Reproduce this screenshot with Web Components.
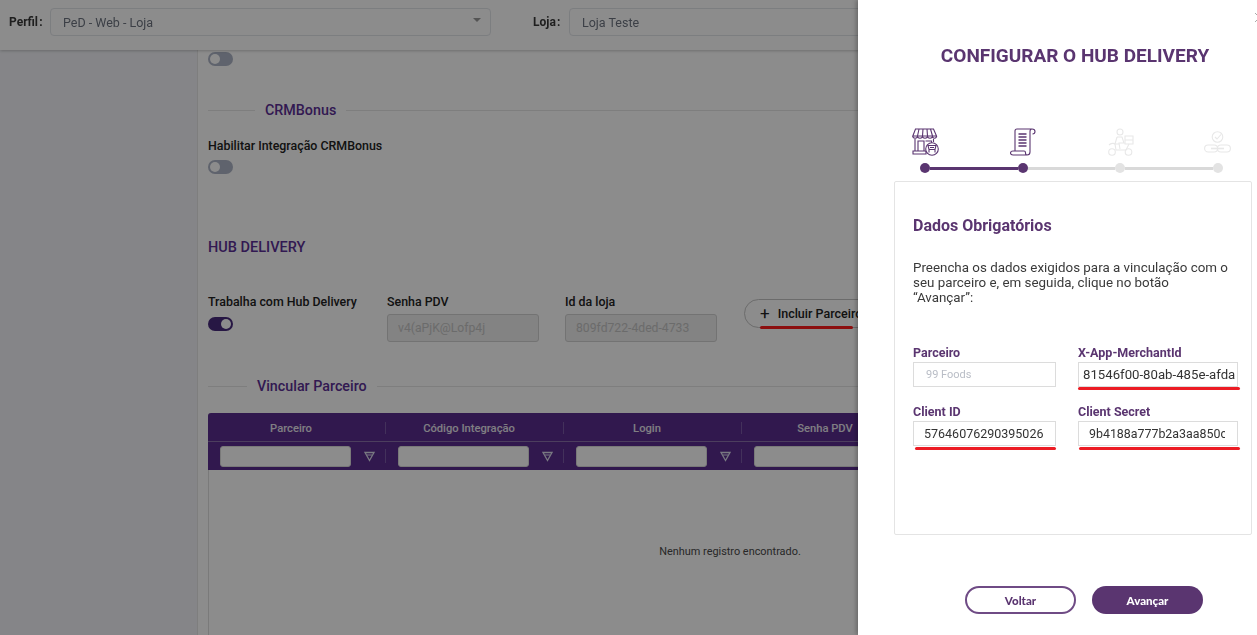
<!DOCTYPE html>
<html lang="pt-BR"><head><meta charset="utf-8"><title>Hub Delivery</title>
<style>
html,body{margin:0;height:635px;overflow:hidden;background:#fff;font-family:Roboto,"Liberation Sans",sans-serif}
</style></head><body>
<app-page></app-page>
<script>
const def=(name,html,init)=>customElements.define(name,class extends HTMLElement{
  constructor(){super();this.attachShadow({mode:'open'}).innerHTML=typeof html==='function'?html(this):html;}
  connectedCallback(){if(init)init(this);}
});
const funnel='<svg width="11" height="11" viewBox="0 0 11 11" fill="none" stroke="#dcdcec" stroke-width="1.3"><path d="M1 1.500h9L5.500 9.500z"/><path d="M3 4h5" stroke-width="1"/></svg>';

def('toggle-switch',t=>`<style>
:host{display:block;width:25px;height:14px;border-radius:7px;background:${t.hasAttribute('on')?'#472a7c':'#adb5c6'};position:relative}
i{position:absolute;top:2px;${t.hasAttribute('on')?'right:2px':'left:2px'};width:10px;height:10px;border-radius:50%;background:#fff}
</style><i></i>`);

def('select-box',t=>`<style>
:host{display:flex;align-items:center;box-sizing:border-box;height:28px;border:1px solid #e2e5ea;border-radius:4px;padding-left:12px;font-size:12.500px;color:#6d7480;position:relative;background:#fff}
b{position:absolute;right:9px;top:9px;border:4px solid transparent;border-top:4px solid #9a9a9a;border-bottom:0;${t.hasAttribute('caret')?'':'display:none'}}
</style><slot></slot><b></b>`);

def('top-bar',`<style>
:host{display:flex;align-items:center;box-sizing:border-box;height:50px;flex:none;background:#fff;box-shadow:0 1px 3px rgba(0,0,0,.22);position:relative;z-index:1;padding:0 0 6px 9px;font-size:12px;color:#3a3a3a}
label{font-weight:700;white-space:nowrap}
.a{width:41px;flex:none}
.p{width:441px;flex:none}.l{width:640px;flex:none}
.b{width:36px;flex:none;margin-left:42px}
</style><label class="a">Perfil&#8202;:</label><select-box class="p" caret>PeD - Web - Loja</select-box><label class="b">Loja&#8202;:</label><select-box class="l">Loja Teste</select-box>`);

def('legend-title',t=>`<style>
:host{display:flex;align-items:center;height:16px;font-size:14.300px;font-weight:500;color:#5b2f95;white-space:nowrap}
i{height:1px;background:#e6e6e6}
.x{width:${t.getAttribute('lead')||47}px;margin-right:10px;flex:none}
.y{flex:1;margin-left:10px}
</style><i class="x"></i><slot></slot><i class="y"></i>`);

def('field-label',`<style>:host{display:block;height:14px;line-height:14px;font-size:12.400px;font-weight:500;color:#222;white-space:nowrap}</style><slot></slot>`);

def('ro-input',`<style>:host{display:block;box-sizing:border-box;width:152px;height:28px;border:1px solid #d2d2d2;border-radius:3px;background:#eee;padding:0 25px 0 10px;font-size:12.200px;color:#c4c4c4;white-space:nowrap}
div{overflow:hidden;line-height:26px}
</style><div><slot></slot></div>`);

def('partner-table',`<style>
:host{display:block;width:1044px;height:300px;background:#fff;border:1px solid #dfdfdf;border-top:0;border-radius:3px 3px 0 0;box-sizing:border-box;font-size:11.200px;color:#555}
.head{background:#5a2d8f;border-radius:3px 3px 0 0;margin:0 -1px}
.row{display:flex}
.h{height:29px;padding-top:2px;border-bottom:1px solid #8a72ac;box-sizing:border-box}
.c{width:178px;flex:none;box-sizing:border-box;display:flex;align-items:center;justify-content:center;padding-right:12px;color:#e9e6ee;font-weight:500;position:relative}
.c::after{content:"";position:absolute;right:0;top:7px;bottom:7px;width:1px;background:#7a5aa6}
.f{height:28px}
.f .c{justify-content:flex-start;padding:0 0 0 12px}
.f input{box-sizing:border-box;width:131px;height:21px;border:1px solid #ddd;border-radius:3px;background:#fff;padding:0;margin:0}
.f svg{margin-left:13px}
.empty{text-align:center;padding-top:75px;line-height:14px;color:#4a4a4a;font-size:10.900px}
</style>
<div class="head">
<div class="row h"><div class="c">Parceiro</div><div class="c">Código Integração</div><div class="c">Login</div><div class="c">Senha PDV</div></div>
<div class="row f"><div class="c"><input aria-label="Parceiro">${funnel}</div><div class="c"><input aria-label="Código">${funnel}</div><div class="c"><input aria-label="Login">${funnel}</div><div class="c"><input aria-label="Senha">${funnel}</div></div>
</div>
<div class="empty">Nenhum registro encontrado.</div>`);

def('main-content',`<style>
:host{display:block;flex:1;min-width:0;background:#fff;padding:2px 0 0 10px;overflow:hidden}
legend-title.crm{margin-top:36px}
field-label.hab{margin-top:21px}
toggle-switch.t2{margin-top:7px}
.hub{margin-top:66px;height:16px;line-height:16px;font-size:14.500px;font-weight:500;color:#5b2f95}
.row{display:grid;grid-template-columns:179px 178px 179px 1fr;margin-top:38px;height:49px}
.row field-label{transform:translateY(1px)}
.row toggle-switch{margin-top:9px}
.row ro-input{margin-top:6px}
.btn{box-sizing:border-box;margin:5px 0 0 0;width:170px;height:29px;border:1px solid #c4c4c4;border-radius:15px;display:flex;align-items:center;padding-left:15px;font-size:12.500px;font-weight:500;color:#222;white-space:nowrap;position:relative}
.btn span{font-size:17px;font-weight:400;margin-right:8px;line-height:1}
.btn::after{content:"";position:absolute;left:15px;top:26px;width:93px;height:3px;border-radius:2px;background:#ff1d1d;z-index:2}
.vin{margin-top:35px}
partner-table{margin-top:19px}
</style>
<toggle-switch></toggle-switch>
<legend-title class="crm" lead="47">CRMBonus</legend-title>
<field-label class="hab">Habilitar Integração CRMBonus</field-label>
<toggle-switch class="t2"></toggle-switch>
<div class="hub">HUB DELIVERY</div>
<div class="row">
<div><field-label>Trabalha com Hub Delivery</field-label><toggle-switch on></toggle-switch></div>
<div><field-label>Senha PDV</field-label><ro-input>v4(aPjK@Lofp4j</ro-input></div>
<div><field-label>Id da loja</field-label><ro-input>809fd722-4ded-4733</ro-input></div>
<div class="btn"><span>+</span>Incluir Parceiro</div>
</div>
<legend-title class="vin" lead="39">Vincular Parceiro</legend-title>
<partner-table></partner-table>`);

const ic={
store:c=>`<svg width="27" height="28" viewBox="0 0 27 28" fill="none" stroke="${c}" stroke-width="1.100"><path d="M3.500 1h18l3 7H.8z"/><path d="M7 1L5.500 8M11 1l-.5 7M15 1l.5 7M18.500 1l2 7"/><path d="M.8 8c0 3 4.700 3 4.700 0 0 3 5 3 5 0 0 3 5 3 5 0 0 3 5 3 5 0 0 3 4 3 4 0"/><path d="M3 11v12M21.500 11v3"/><path d="M6 23V13h6v10M13.500 13h6v3"/><path d="M1 23h13v3H1z"/><circle cx="20" cy="21" r="6.300" fill="#fff"/><path d="M16 17.500h8l-1 4h-6zM17 21.500v3M23 21.500v3M18 19.500h4"/></svg>`,
scroll:c=>`<svg width="26" height="28" viewBox="0 0 26 28" fill="none" stroke="${c}" stroke-width="1.100"><path d="M5 23V3c0-1.300.8-2 2-2h15c1.500 0 3 1 3 2.500S24 6 22.500 6M22 1c-1.300 0-2 1-2 2.500V24c0 2-1 3-3 3H3c-1.500 0-2.500-1-2.500-2s1-2 2.500-2h11c1 0 1.500.7 1.500 1.700S16 27 17 27"/><path d="M8.500 6h8M8.500 9h8M8.500 12h8M8.500 15h8M8.500 18h8" stroke-width="1.300"/></svg>`,
scooter:c=>`<svg width="27" height="28" viewBox="0 0 27 28" fill="none" stroke="${c}" stroke-width="1.100"><circle cx="13" cy="4" r="3"/><path d="M10 9h5l2 6h-5l1 6M10 9l-2 7 4 0"/><path d="M18 8h8v8h-8zM18 12h8"/><path d="M2 17c2-2 5-2 6-1l1 6h10l3-6"/><circle cx="5" cy="24" r="3.300"/><circle cx="21.500" cy="24" r="3.300"/></svg>`,
chain:c=>`<svg width="27" height="22" viewBox="0 0 27 22" fill="none" stroke="${c}" stroke-width="1.100"><circle cx="13.500" cy="6" r="5.300"/><path d="M11 6l2 2 4-4.500"/><rect x=".6" y="14" width="13" height="7" rx="3.500"/><rect x="13.400" y="14" width="13" height="7" rx="3.500"/><path d="M7 17.500h13" stroke-width="1.600"/></svg>`
};
def('step-bar',`<style>
:host{display:block;width:303px;margin-left:26px}
.icons{display:flex;justify-content:space-between;height:28px;align-items:center}
.cell{width:10px;display:flex;justify-content:center}
svg{flex:none}
.track{display:flex;align-items:center;margin-top:7px}
i{width:10px;height:10px;border-radius:50%;background:#5a3570;flex:none}
i.off{background:#e3e3e3}
u{flex:1;height:3px;background:#5a3570;display:block}
u.off{background:#d9d9d9}
</style>
<div class="icons">
<div class="cell">${ic.store('#5a3570')}</div><div class="cell">${ic.scroll('#5a3570')}</div><div class="cell">${ic.scooter('#e8e8e8')}</div><div class="cell">${ic.chain('#e8e8e8')}</div>
</div>
<div class="track"><i></i><u></u><i></i><u class="off"></u><i class="off"></i><u class="off"></u><i class="off"></i></div>`);

def('form-field',t=>`<style>
:host{display:block;position:relative}
label{display:block;height:14px;line-height:14px;font-size:12.500px;font-weight:700;color:#5a3570;white-space:nowrap}
.v{box-sizing:border-box;height:25px;margin-top:2px;border:1px solid #dcdcdc;background:#fff;white-space:nowrap;font-size:${t.getAttribute('fs')||'12.600'}px;color:#333;padding:0 ${t.getAttribute('padr')||'0'}px 0 ${t.getAttribute('pad')||'12'}px}
.v div{overflow:hidden;line-height:23px}
:host([muted]) .v{font-size:11px;color:#b9bdc6}
.r{position:absolute;left:${t.getAttribute('rl')||'0'}px;right:${t.getAttribute('rr')||'0'}px;top:${t.getAttribute('rt')||'41'}px;height:3px;border-radius:2px;background:#ec1c24;${t.hasAttribute('mark')?'':'display:none'}}
</style><label>${t.getAttribute('label')}</label><div class="v"><div><slot></slot></div></div><div class="r"></div>`);

def('data-card',`<style>
:host{display:block;box-sizing:border-box;width:358px;height:354px;border:1px solid #e4e4e4;border-radius:2px;padding:35px 10px 0 18px;color:#333}
h2{margin:0;font-size:16px;line-height:18px;font-weight:700;color:#5a3570}
p{margin:25px 0 0;font-size:13.360px;line-height:15px;color:#3a3a3a;white-space:nowrap}
.grid{display:grid;grid-template-columns:143px 160px;column-gap:22px;row-gap:18px;margin-top:41px}
</style>
<h2>Dados Obrigatórios</h2>
<p>Preencha os dados exigidos para a vinculação com o<br>seu parceiro e, em seguida, clique no botão<br>“Avançar”:</p>
<div class="grid">
<form-field label="Parceiro" muted>99 Foods</form-field>
<form-field label="X-App-MerchantId" pad="4" fs="13.200" mark rl="0" rr="-2">81546f00-80ab-485e-afda</form-field>
<form-field label="Client ID" pad="10" fs="12.500" mark rl="2" rr="0" rt="42">57646076290395026</form-field>
<form-field label="Client Secret" pad="10" padr="12" fs="12.400" mark rl="1" rr="-2" rt="42">9b4188a777b2a3aa850c</form-field>
</div>`);

def('hub-drawer',`<style>
:host{position:absolute;left:858px;top:0;width:399px;height:635px;box-sizing:border-box;background:#fff;box-shadow:-2px 0 4px rgba(0,0,0,.25);z-index:3;padding-left:36px;display:flex;flex-direction:column}
h1{margin:45px 0 0;width:362px;text-align:center;font-size:19px;line-height:22px;font-weight:700;color:#5a3570;white-space:nowrap}
step-bar{margin-top:61px}
data-card{margin-top:8px}
.foot{display:flex;gap:16px;margin:51px 0 0 71px;font-family:Lato,sans-serif;font-size:11.500px;font-weight:900}
.foot div{box-sizing:border-box;width:111px;height:28px;border-radius:14px;display:flex;align-items:center;justify-content:center}
.v{border:2px solid #6f4b85;color:#5a3570;background:#fff}
.n{background:#5a3570;color:#fff}
.close{position:absolute;right:0;top:13px}
</style>
<svg class="close" width="2" height="10" viewBox="0 0 2 10" fill="none" stroke="#aaa" stroke-width="1"><path d="M0 0l9 9M0 9l9-9"/></svg>
<h1>CONFIGURAR O HUB DELIVERY</h1>
<step-bar></step-bar>
<data-card></data-card>
<div class="foot"><div class="v">Voltar</div><div class="n">Avançar</div></div>`);

def('app-page',`<style>
:host{display:block;position:relative;width:1257px;height:635px;overflow:hidden;filter:blur(.35px)}
.stage{display:flex;flex-direction:column;height:635px}
.body{display:flex;flex:1;min-height:0}
.side{width:198px;flex:none;background:#f2f3f7;box-shadow:inset -1px 0 0 #e6e6e6}
.dim{position:absolute;inset:0;background:rgba(0,0,0,.45);z-index:2}
</style>
<div class="stage"><top-bar></top-bar><div class="body"><div class="side"></div><main-content></main-content></div></div>
<div class="dim"></div>
<hub-drawer></hub-drawer>`);
</script>
</body></html>
